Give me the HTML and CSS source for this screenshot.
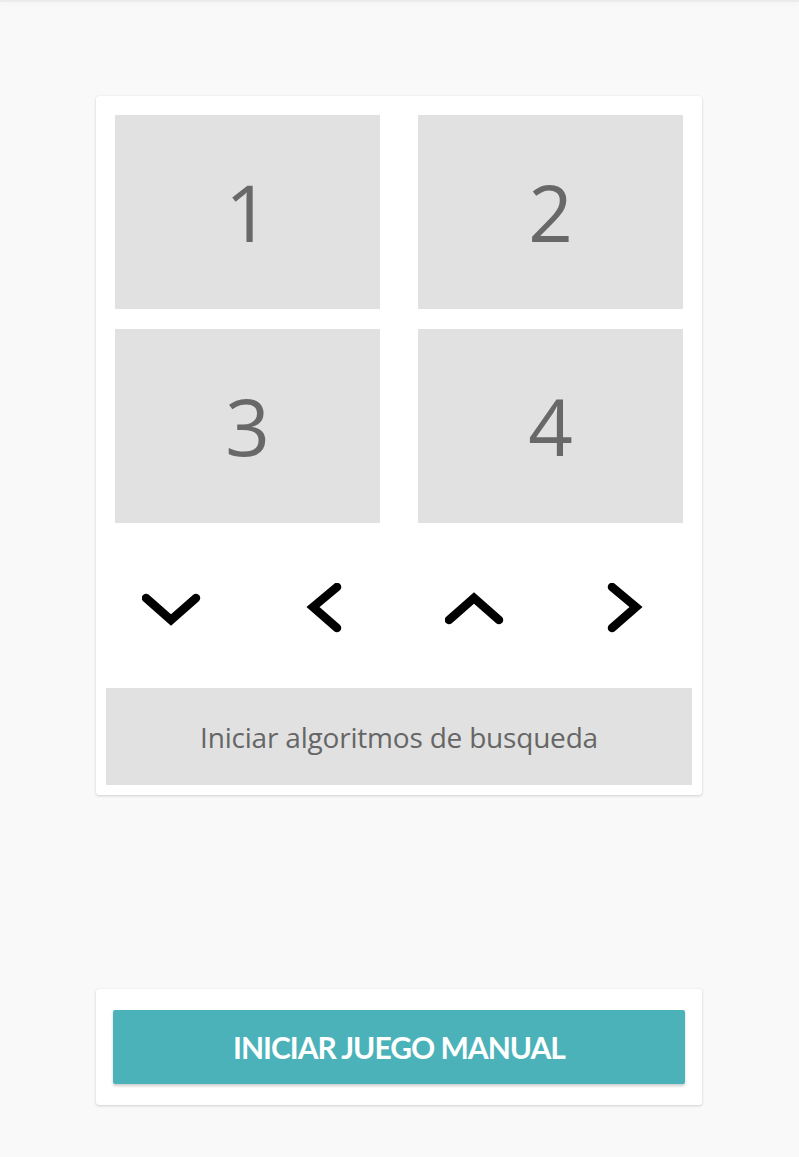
FILE: index.html
```html
<!DOCTYPE html>
<html lang="es">
<head>
<meta charset="utf-8">
<link rel="stylesheet" href="styles.css">
</head>
<body>
<div class="topbar"></div>
<main class="page">
  <section class="card board">
    <div class="grid">
      <div class="tile">1</div>
      <div class="tile">2</div>
      <div class="tile">3</div>
      <div class="tile">4</div>
    </div>
    <div class="arrows">
      <button class="arrow" aria-label="abajo">
        <svg width="60" height="40" viewBox="0 0 60 40"><polyline points="4,10 29,32 54,10"/></svg>
      </button>
      <button class="arrow" aria-label="izquierda">
        <svg width="40" height="50" viewBox="0 0 40 50"><polyline points="34,4 10,24 34,45"/></svg>
      </button>
      <button class="arrow" aria-label="arriba">
        <svg width="60" height="40" viewBox="0 0 60 40"><polyline points="4,32 29,10 54,32"/></svg>
      </button>
      <button class="arrow" aria-label="derecha">
        <svg width="40" height="50" viewBox="0 0 40 50"><polyline points="6,4 30,24 6,45"/></svg>
      </button>
    </div>
    <button class="search">Iniciar algoritmos de busqueda</button>
  </section>
  <section class="card manual">
    <button class="primary">INICIAR JUEGO MANUAL</button>
  </section>
</main>
</body>
</html>
```

FILE: styles.css
```css
html, body {
  margin: 0;
  padding: 0;
}
body {
  background: #f9f9f9;
  font-family: "Open Sans", "Noto Sans", sans-serif;
  min-height: 1157px;
}
.topbar {
  height: 2px;
  background: #ececec;
  box-shadow: 0 1px 6px rgba(0,0,0,0.06);
}
.page {
  width: 606px;
  margin-left: 96px;
  padding-top: 94px;
  display: flex;
  flex-direction: column;
}
.card {
  background: #fff;
  border-radius: 3px;
  box-shadow: 0 1px 3px rgba(0,0,0,0.16), 0 0 1px rgba(0,0,0,0.08);
}
.board {
  padding: 19px 10px 10px;
}
.grid {
  display: grid;
  grid-template-columns: 265px 265px;
  grid-auto-rows: 194px;
  column-gap: 38px;
  row-gap: 20px;
  padding: 0 9px;
}
.tile {
  background: #e1e1e1;
  color: #686868;
  font-family: "Open Sans", sans-serif;
  font-size: 78px;
  font-weight: 400;
  display: flex;
  align-items: center;
  justify-content: center;
}
.arrows {
  display: grid;
  grid-template-columns: repeat(4, 1fr);
  margin: 0 -10px;
  padding-top: 5px;
  height: 160px;
  align-items: center;
}
.arrow {
  border: 0;
  background: none;
  padding: 0;
  display: flex;
  justify-content: center;
  align-items: center;
  height: 60px;
}
.arrow svg polyline {
  fill: none;
  stroke: #000;
  stroke-width: 8.5;
  stroke-linecap: round;
  stroke-linejoin: miter;
}
.search {
  display: block;
  width: 100%;
  height: 97px;
  border: 0;
  background: #e1e1e1;
  color: #666;
  font-family: "Open Sans", sans-serif;
  font-size: 28px;
  font-weight: 400;
  letter-spacing: -0.2px;
}
.manual {
  margin-top: 194px;
  padding: 21px 17px 21px;
}
.primary {
  display: block;
  width: 100%;
  height: 74px;
  border: 0;
  border-radius: 2px;
  background: #4bb2b9;
  color: #fff;
  font-family: "Lato", sans-serif;
  font-size: 30px;
  font-weight: 700;
  letter-spacing: -1px;
  box-shadow: 0 2px 3px rgba(0,0,0,0.2);
}
```
